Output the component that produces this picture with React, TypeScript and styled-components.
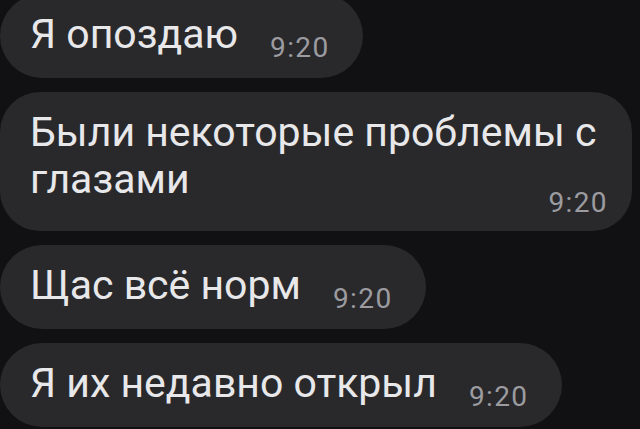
import React from "react";
import styled, { createGlobalStyle } from "styled-components";

const Global = createGlobalStyle`
  html, body { margin: 0; padding: 0; background: #111113; }
  body { width: 640px; height: 429px; overflow: hidden; font-family: Roboto, "Noto Sans", "DejaVu Sans", sans-serif; }
`;

const Chat = styled.div`
  display: flex;
  flex-direction: column;
  align-items: flex-start;
  gap: 14px;
  margin-top: -6px;
`;

const Bubble = styled.div<{ $multi?: boolean }>`
  box-sizing: border-box;
  background: #29292c;
  border-radius: ${(p) => (p.$multi ? "40px" : "42px")};
  padding: ${(p) => (p.$multi ? "17px 24px 28px 30px" : "17px 33px 20px 30px")};
  min-height: 84px;
  max-width: 632px;
  width: ${(p) => (p.$multi ? "632px" : "auto")};
  color: #e8e8ea;
  font-size: 41px;
  line-height: 47px;
  white-space: ${(p) => (p.$multi ? "normal" : "nowrap")};
`;

const Text = styled.span``;

const Time = styled.span<{ $multi?: boolean }>`
  font-size: 28px;
  letter-spacing: 1.4px;
  color: #9c9ca0;
  ${(p) =>
    p.$multi
      ? `display: block; width: fit-content; margin-left: auto; line-height: 0; margin-top: 0;`
      : `display: inline-block; line-height: 16px; vertical-align: -9px; margin-left: 32px;`}
`;

const messages = [
  { text: "Я опоздаю", time: "9:20" },
  { text: "Были некоторые проблемы с глазами", time: "9:20", multi: true },
  { text: "Щас всё норм", time: "9:20" },
  { text: "Я их недавно открыл", time: "9:20" },
];

export default function App() {
  return (
    <>
      <Global />
      <Chat>
        {messages.map((m, i) => (
          <Bubble key={i} $multi={m.multi}>
            <Text>{m.text}</Text>
            <Time $multi={m.multi}>{m.time}</Time>
          </Bubble>
        ))}
      </Chat>
    </>
  );
}
